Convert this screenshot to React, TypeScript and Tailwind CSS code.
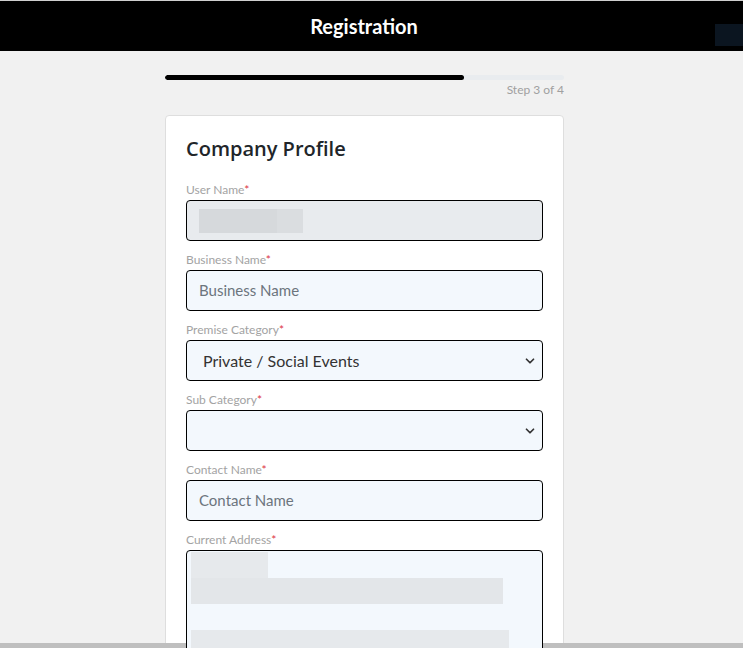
import { ChevronDown } from 'lucide-react';

const font = { fontFamily: 'Lato, "Open Sans", sans-serif' };

function Label({ text }: { text: string }) {
  return (
    <div className="mb-[2px] h-[16px] text-[12px] leading-[16px] text-[#a3a3a3]">
      {text}
      <span className="text-[#dc3545]">*</span>
    </div>
  );
}

function TextField({ label, placeholder }: { label: string; placeholder: string }) {
  return (
    <div className="mb-[11px]">
      <Label text={label} />
      <div className="flex h-[41px] items-center rounded-[4px] border border-black bg-[#f3f8fd] px-[12px] text-[15px] text-[#6c757d]">
        {placeholder}
      </div>
    </div>
  );
}

function SelectField({ label, value }: { label: string; value: string }) {
  return (
    <div className="mb-[11px]">
      <Label text={label} />
      <div className="flex h-[41px] items-center justify-between rounded-[4px] border border-black bg-[#f3f8fd] pl-[16px] pr-[5px] text-[16px] text-[#333]">
        <span>{value}</span>
        <ChevronDown size={14} strokeWidth={3} className="text-[#333]" />
      </div>
    </div>
  );
}

export default function App() {
  return (
    <div className="relative min-h-screen bg-[#f1f1f1]" style={font}>
      <header className="flex h-[51px] items-center justify-center border-t border-[#cfcfcf] bg-black pr-[15px]">
        <h1 className="text-[20px] font-bold text-white">Registration</h1>
      </header>
      {/* leftover dark widget at the top right */}
      <div className="absolute right-0 top-[24px] h-[22px] w-[28px] bg-[#0b1520]" />

      <main className="w-[399px] pb-10" style={{ marginLeft: 165 }}>
        <div className="mt-[24px] h-[5px] overflow-hidden rounded-full bg-[#e9ecef]">
          <div className="h-full w-3/4 rounded-full bg-black" />
        </div>
        <div className="mt-[2px] text-right text-[12px] leading-[16px] text-[#a0a0a0]">Step 3 of 4</div>

        <div className="mt-[17px] rounded-[4px] border border-[#dedede] bg-white px-[20px] pt-[19px]">
          <h2 className="mb-[19px] text-[20px] font-semibold leading-[28px] text-[#212529]" style={{ fontFamily: '"Open Sans", sans-serif' }}>
            Company Profile
          </h2>

          <div className="mb-[11px]">
            <Label text="User Name" />
            <div className="flex h-[41px] items-center rounded-[4px] border border-black bg-[#e8ebee] px-[12px]">
              <div className="h-[24px] w-[78px] bg-[#d6d9dc]" />
              <div className="h-[24px] w-[26px] bg-[#dadde0]" />
            </div>
          </div>

          <TextField label="Business Name" placeholder="Business Name" />
          <SelectField label="Premise Category" value="Private / Social Events" />
          <SelectField label="Sub Category" value="" />
          <TextField label="Contact Name" placeholder="Contact Name" />

          <div className="mb-[11px]">
            <Label text="Current Address" />
            <div className="relative z-10 h-[130px] rounded-[4px] border border-black bg-[#f3f8fd] px-[4px] pt-[1px]">
              <div className="h-[26px] w-[77px] bg-[#e6e9ec]" />
              <div className="h-[26px] w-[312px] bg-[#e3e6e9]" />
              <div className="mt-[26px] h-[26px] w-[318px] bg-[#e6e9ec]" />
            </div>
          </div>
        </div>
      </main>

      <div className="fixed bottom-0 left-0 right-0 h-[5px] bg-[#bfbfbf]" />
    </div>
  );
}
